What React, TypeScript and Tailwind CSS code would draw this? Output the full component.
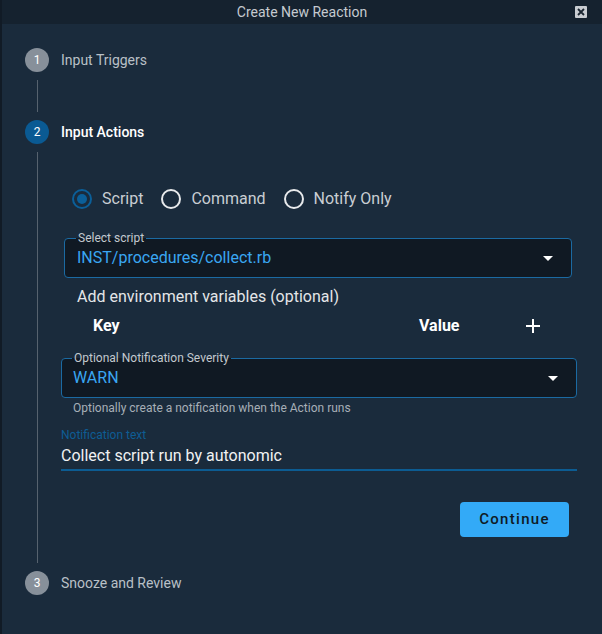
import React from 'react';

const font = { fontFamily: 'Roboto, "Liberation Sans", sans-serif' };

function StepCircle({ n, active }: { n: number; active?: boolean }) {
  return (
    <div
      className={`w-6 h-6 rounded-full flex items-center justify-center text-[12px] text-white shrink-0 ${
        active ? 'bg-[#0a5a93]' : 'bg-[#87909a]'
      }`}
    >
      {n}
    </div>
  );
}

function Radio({ label, checked }: { label: string; checked?: boolean }) {
  return (
    <div className="flex items-center mr-[18px]">
      <div
        className={`w-5 h-5 rounded-full border-2 flex items-center justify-center mr-[10px] ${
          checked ? 'border-[#0b5f99]' : 'border-[#e8eaec]'
        }`}
      >
        {checked && <div className="w-[10px] h-[10px] rounded-full bg-[#0b5f99]" />}
      </div>
      <span className="text-[16px] text-[#c9ced3]">{label}</span>
    </div>
  );
}

function Caret() {
  return (
    <svg width="10" height="5" viewBox="0 0 10 5" className="shrink-0">
      <path d="M0 0 L10 0 L5 5 Z" fill="#ffffff" />
    </svg>
  );
}

function OutlinedSelect({ label, value, className }: { label: string; value: string; className: string }) {
  return (
    <div className={`relative h-10 rounded-[4px] border border-[#1b6aa2] bg-[#101923] flex items-center justify-between ${className}`}>
      <span className="absolute -top-[8px] px-[2px] text-[12px] leading-[14px] text-[#c3c9cf] bg-[linear-gradient(to_bottom,#1a2b3c_50%,#101923_50%)]">
        {label}
      </span>
      <span className="text-[16px] text-[#3aa7f2]">{value}</span>
      <Caret />
    </div>
  );
}

export default function App() {
  return (
    <div className="w-[602px] h-[634px] flex flex-col bg-[#1a2b3c] overflow-hidden border-l-2 border-[#111b26]" style={font}>
      <div className="relative h-6 shrink-0 bg-[#15222f] flex items-center justify-center">
        <span className="text-[14px] text-[#c5cad0]">Create New Reaction</span>
        <div className="absolute right-[15px] top-[6px] w-3 h-3 bg-[#c9cdd2] flex items-center justify-center rounded-[1px]">
          <svg width="8" height="8" viewBox="0 0 8 8">
            <path d="M1 1 L7 7 M7 1 L1 7" stroke="#1a2530" strokeWidth="1.8" />
          </svg>
        </div>
      </div>

      <div className="flex-1 pl-[23px] pt-6">
        <div className="flex items-center h-6">
          <StepCircle n={1} />
          <span className="ml-3 text-[14px] text-[#b9c0c7]">Input Triggers</span>
        </div>
        <div className="ml-3 my-2 h-8 border-l border-[#56626e]" />

        <div className="flex items-center h-6">
          <StepCircle n={2} active />
          <span className="ml-3 text-[14px] font-medium text-white">Input Actions</span>
        </div>

        <div className="ml-3 my-2 h-[411px] border-l border-[#56626e]">
          <div className="pl-[23px] w-[540px] flex flex-col pt-[35px]">
            <div className="flex items-center h-6 ml-[11px]">
              <Radio label="Script" checked />
              <Radio label="Command" />
              <Radio label="Notify Only" />
            </div>

            <OutlinedSelect
              label="Select script"
              value="INST/procedures/collect.rb"
              className="mt-[27px] ml-[3px] w-[508px] pl-[12px] pr-[18px] [&>span:first-child]:left-[11px]"
            />

            <div className="mt-[9px] ml-4 text-[16px] leading-5 text-[#e4e6e8]">Add environment variables (optional)</div>

            <div className="mt-[7px] h-6 flex items-center pl-[32px] text-[16px] font-bold text-white">
              <span className="w-[326px]">Key</span>
              <span className="w-[107px]">Value</span>
              <svg width="14" height="14" viewBox="0 0 14 14">
                <path d="M7 0 V14 M0 7 H14" stroke="#ffffff" strokeWidth="2" />
              </svg>
            </div>

            <OutlinedSelect
              label="Optional Notification Severity"
              value="WARN"
              className="mt-5 w-[516px] pl-[11px] pr-[18px] [&>span:first-child]:left-[10px]"
            />
            <div className="mt-[3px] ml-3 text-[12px] leading-[14px] text-[#a7afb7]">
              Optionally create a notification when the Action runs
            </div>

            <div className="mt-[13px] text-[12px] leading-[14px] text-[#0e5d94]">Notification text</div>
            <div className="mt-1 text-[16px] leading-5 text-[#f1f2f3]">Collect script run by autonomic</div>
            <div className="mt-[3px] w-[516px] h-[2px] bg-[#0c5c92]" />

            <div className="mt-[31px] w-[516px] flex justify-end pr-2">
              <button className="w-[109px] h-[35px] rounded-[4px] bg-[#33aaf7] text-[15px] font-medium tracking-[1.3px] text-[#0f1a25]">
                Continue
              </button>
            </div>
          </div>
        </div>

        <div className="flex items-center h-6">
          <StepCircle n={3} />
          <span className="ml-3 text-[14px] text-[#b9c0c7]">Snooze and Review</span>
        </div>
      </div>
    </div>
  );
}
